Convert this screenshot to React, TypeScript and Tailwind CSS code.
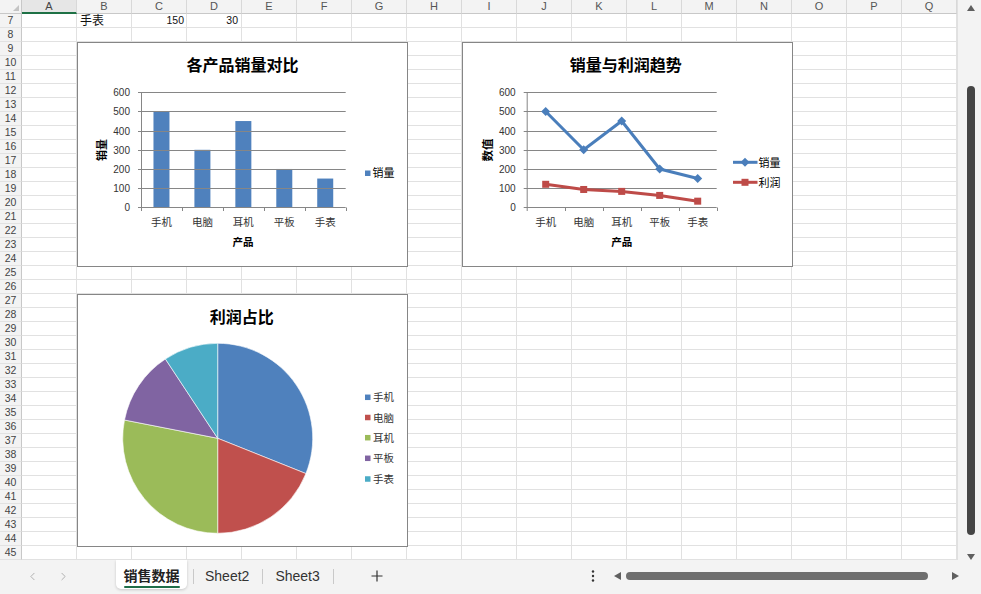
import { ChevronLeft, ChevronRight } from 'lucide-react';

const COLS = 'ABCDEFGHIJKLMNOPQ'.split('');
const ROWS = Array.from({ length: 39 }, (_, i) => i + 7);
const CATS = ['手机', '电脑', '耳机', '平板', '手表'];
const SALES = [500, 300, 450, 200, 150];
const PROFIT = [120, 93, 83, 62, 32];

const AXIS = '#868686';
const TXT = '#333333';
const BLUE = '#4f81bd';
const RED = '#c0504d';

// value -> y inside a chart (0 sits at 165.3, 600 at 50.3)
const valY = (v: number) => 165.3 - v * 0.19167;

function Axes({ x0, x1 }: { x0: number; x1: number }) {
  const cw = (x1 - x0) / 5;
  return (
    <>
      {[0, 1, 2, 3, 4, 5, 6].map(i => {
        const y = Math.round(valY(i * 100)) + 0.5;
        return (
          <g key={i}>
            <line x1={x0 - 3} x2={x1} y1={y} y2={y} stroke={AXIS} strokeWidth={1} />
            <text x={x0 - 11} y={y + 3.5} textAnchor="end" fontSize={10} fill={TXT}>
              {i * 100}
            </text>
          </g>
        );
      })}
      <line x1={x0 + 0.5} x2={x0 + 0.5} y1={50.5} y2={169} stroke={AXIS} />
      {[1, 2, 3, 4, 5].map(k => (
        <line key={k} x1={Math.round(x0 + k * cw) + 0.5} x2={Math.round(x0 + k * cw) + 0.5} y1={165.5} y2={169} stroke={AXIS} />
      ))}
      {CATS.map((c, k) => (
        <text key={c} x={x0 + cw / 2 + k * cw} y={183.5} textAnchor="middle" fontSize={10.5} fill={TXT}>
          {c}
        </text>
      ))}
    </>
  );
}

function BarChart() {
  const x0 = 64;
  const x1 = 268.7;
  const cw = (x1 - x0) / 5;
  return (
    <svg width={329} height={223} viewBox="1 1 329 223">
      <text x={165.5} y={28.5} textAnchor="middle" fontSize={16} fontWeight="bold" fill="#000">
        各产品销量对比
      </text>
      {SALES.map((v, k) => (
        <rect key={k} x={x0 + cw / 2 + k * cw - 8} y={valY(v)} width={16} height={valY(0) - valY(v)} fill={BLUE} />
      ))}
      <Axes x0={x0} x1={x1} />
      <text x={166} y={203.5} textAnchor="middle" fontSize={10.5} fontWeight="bold" fill="#000">
        产品
      </text>
      <text x={24.5} y={108} transform="rotate(-90 24.5 108)" textAnchor="middle" dominantBaseline="central" fontSize={11} fontWeight="bold" fill="#000">
        销量
      </text>
      <rect x={288} y={128.5} width={5.5} height={5.5} fill={BLUE} />
      <text x={295.5} y={135} fontSize={11} fill="#000">
        销量
      </text>
    </svg>
  );
}

function LineChart() {
  const x0 = 64.7;
  const x1 = 254.7;
  const cw = (x1 - x0) / 5;
  const px = (k: number) => x0 + cw / 2 + k * cw;
  const blue = '#4a7ebb';
  const red = '#be4b48';
  return (
    <svg width={329} height={223} viewBox="1 1 329 223">
      <text x={163.7} y={28.5} textAnchor="middle" fontSize={16} fontWeight="bold" fill="#000">
        销量与利润趋势
      </text>
      <Axes x0={x0} x1={x1} />
      <polyline points={SALES.map((v, k) => `${px(k)},${valY(v)}`).join(' ')} fill="none" stroke={blue} strokeWidth={3} strokeLinejoin="round" />
      <polyline points={PROFIT.map((v, k) => `${px(k)},${valY(v)}`).join(' ')} fill="none" stroke={red} strokeWidth={3} strokeLinejoin="round" />
      {SALES.map((v, k) => {
        const x = px(k);
        const y = valY(v);
        return <polygon key={k} points={`${x},${y - 4.5} ${x + 4.5},${y} ${x},${y + 4.5} ${x - 4.5},${y}`} fill={blue} />;
      })}
      {PROFIT.map((v, k) => (
        <rect key={k} x={px(k) - 3.5} y={valY(v) - 3.5} width={7} height={7} fill={red} />
      ))}
      <text x={159.7} y={203.5} textAnchor="middle" fontSize={10.5} fontWeight="bold" fill="#000">
        产品
      </text>
      <text x={26} y={108} transform="rotate(-90 26 108)" textAnchor="middle" dominantBaseline="central" fontSize={11.5} fontWeight="bold" fill="#000">
        数值
      </text>
      <line x1={271} x2={295.5} y1={120.3} y2={120.3} stroke={blue} strokeWidth={3} />
      <polygon points="283,115.8 287.5,120.3 283,124.8 278.5,120.3" fill={blue} />
      <text x={296.5} y={124.5} fontSize={11} fill="#000">
        销量
      </text>
      <line x1={271} x2={295.5} y1={140.3} y2={140.3} stroke={red} strokeWidth={3} />
      <rect x={279.5} y={136.8} width={7} height={7} fill={red} />
      <text x={296.5} y={144.5} fontSize={11} fill="#000">
        利润
      </text>
    </svg>
  );
}

function slicePath(cx: number, cy: number, r: number, a0: number, a1: number) {
  const rad = (d: number) => (d * Math.PI) / 180;
  const p = (a: number) => [cx + r * Math.sin(rad(a)), cy - r * Math.cos(rad(a))];
  const [sx, sy] = p(a0);
  const [ex, ey] = p(a1);
  const large = a1 - a0 > 180 ? 1 : 0;
  return `M${cx},${cy} L${sx},${sy} A${r},${r} 0 ${large} 1 ${ex},${ey} Z`;
}

const SLICES = [
  { name: '手机', color: '#4f81bd', a0: 0, a1: 111.8 },
  { name: '电脑', color: '#c0504d', a0: 111.8, a1: 180 },
  { name: '耳机', color: '#9bbb59', a0: 180, a1: 281.1 },
  { name: '平板', color: '#8064a2', a0: 281.1, a1: 326.6 },
  { name: '手表', color: '#4bacc6', a0: 326.6, a1: 360 },
];

function PieChart() {
  const legendY = [103.3, 123.5, 143.7, 164.3, 185];
  return (
    <svg width={329} height={251} viewBox="1 1 329 251">
      <text x={164.7} y={28.5} textAnchor="middle" fontSize={16} fontWeight="bold" fill="#000">
        利润占比
      </text>
      {SLICES.map(s => (
        <path key={s.name} d={slicePath(140.7, 144.3, 95, s.a0, s.a1)} fill={s.color} stroke="#ffffff" strokeWidth={0.6} />
      ))}
      {SLICES.map((s, i) => (
        <g key={s.name}>
          <rect x={288} y={legendY[i] - 2.75} width={5.5} height={5.5} fill={s.color} />
          <text x={296} y={legendY[i] + 4} fontSize={10.5} fill={TXT}>
            {s.name}
          </text>
        </g>
      ))}
    </svg>
  );
}

function Triangle({ dir }: { dir: 'up' | 'down' | 'left' | 'right' }) {
  const pts = {
    up: '0,6 4,0 8,6',
    down: '0,0 8,0 4,6',
    left: '7,0 7,8 0,4',
    right: '0,0 7,4 0,8',
  }[dir];
  const vertical = dir === 'up' || dir === 'down';
  return (
    <svg width={vertical ? 8 : 7} height={vertical ? 6 : 8} className="shrink-0">
      <polygon points={pts} fill="#5f5f5f" />
    </svg>
  );
}

function Sheet() {
  return (
    <div className="relative w-[957px] bg-white">
      <div className="flex h-[14px]">
        <div className="relative w-[22px] h-[14px] bg-[#f3f3f3] border-r border-b border-[#c8c8c8]">
          <div className="absolute right-[2px] bottom-[2px] w-0 h-0 border-l-[6px] border-l-transparent border-b-[6px] border-b-[#c4c4c4]" />
        </div>
        {COLS.map(c => (
          <div
            key={c}
            className={
              c === 'A'
                ? 'w-[55px] h-[14px] flex items-center justify-center bg-[#e6e6e6] border-r border-[#d8d8d8] border-b-2 border-b-[#1e7145] text-[11px] leading-none text-[#444]'
                : 'w-[55px] h-[14px] flex items-center justify-center bg-[#f3f3f3] border-r border-[#d8d8d8] border-b border-b-[#c8c8c8] text-[11px] leading-none text-[#555]'
            }
          >
            {c}
          </div>
        ))}
      </div>
      {ROWS.map(r => (
        <div key={r} className="flex h-[14px]">
          <div className="w-[22px] h-[14px] flex items-center justify-center bg-[#f3f3f3] border-r border-r-[#c8c8c8] border-b border-b-[#e2e2e2] text-[10.5px] leading-none text-[#444]">
            {r}
          </div>
          {COLS.map(c => (
            <div key={c} className="w-[55px] h-[14px] border-r border-b border-[#e1e1e1] flex items-center text-[10.5px] leading-none text-[#111]">
              {r === 7 && c === 'B' && <span className="pl-[3px] text-[12px]">手表</span>}
              {r === 7 && c === 'C' && <span className="ml-auto pr-[2px]">150</span>}
              {r === 7 && c === 'D' && <span className="ml-auto pr-[3px]">30</span>}
            </div>
          ))}
        </div>
      ))}

      <div className="absolute left-[77px] top-[42px] w-[331px] h-[225px] bg-white border border-[#868686]">
        <BarChart />
      </div>
      <div className="absolute left-[462px] top-[42px] w-[331px] h-[225px] bg-white border border-[#868686]">
        <LineChart />
      </div>
      <div className="absolute left-[77px] top-[294px] w-[331px] h-[253px] bg-white border border-[#868686]">
        <PieChart />
      </div>
    </div>
  );
}

export default function App() {
  return (
    <div className="w-[981px] h-[594px] flex flex-col bg-[#f3f3f3] overflow-hidden font-['Liberation_Sans','Noto_Sans_CJK_SC',sans-serif]">
      <div className="flex h-[560px]">
        <Sheet />
        <div className="w-[24px] h-[560px] flex flex-col items-center pl-[2px] bg-[#f3f3f3] border-l border-[#e0e0e0]">
          <div className="mt-[5px]">
            <Triangle dir="up" />
          </div>
          <div className="mt-[75px] w-[8px] h-[449px] rounded-full bg-[#454545]" />
          <div className="mt-[19px]">
            <Triangle dir="down" />
          </div>
        </div>
      </div>

      <div className="flex items-start h-[34px] text-[14px] text-[#333]">
        <div className="flex items-center h-[32px] pl-[26px] gap-[18px] text-[#a6a6a6]">
          <ChevronLeft size={13} strokeWidth={1.6} />
          <ChevronRight size={13} strokeWidth={1.6} />
        </div>
        <div className="ml-[46px] w-[71px] h-[29px] bg-white rounded-b-[5px] shadow-[0_1px_3px_rgba(0,0,0,0.18)] flex flex-col items-center pt-[8px]">
          <span className="font-bold leading-[16px] text-[#222]">销售数据</span>
          <span className="mt-[2px] w-[56px] h-[2px] rounded-full bg-[#1e6e48]" />
        </div>
        <div className="flex items-center h-[32px]">
          <span className="ml-[6px] w-px h-[15px] bg-[#c9c9c9]" />
          <span className="ml-[11px] leading-none">Sheet2</span>
          <span className="ml-[13px] w-px h-[15px] bg-[#c9c9c9]" />
          <span className="ml-[12px] leading-none">Sheet3</span>
          <span className="ml-[13px] w-px h-[15px] bg-[#c9c9c9]" />
          <svg width={12} height={12} className="ml-[37px]">
            <path d="M6 0.5V11.5M0.5 6H11.5" stroke="#333" strokeWidth={1.2} />
          </svg>
          <svg width={4} height={12} className="ml-[208px]">
            <circle cx={2} cy={1.5} r={1.2} fill="#333" />
            <circle cx={2} cy={6} r={1.2} fill="#333" />
            <circle cx={2} cy={10.5} r={1.2} fill="#333" />
          </svg>
          <span className="ml-[19px] flex">
            <Triangle dir="left" />
          </span>
          <span className="ml-[5px] w-[302px] h-[8px] rounded-full bg-[#6e6e6e]" />
          <span className="ml-[24px] flex">
            <Triangle dir="right" />
          </span>
        </div>
      </div>
    </div>
  );
}
